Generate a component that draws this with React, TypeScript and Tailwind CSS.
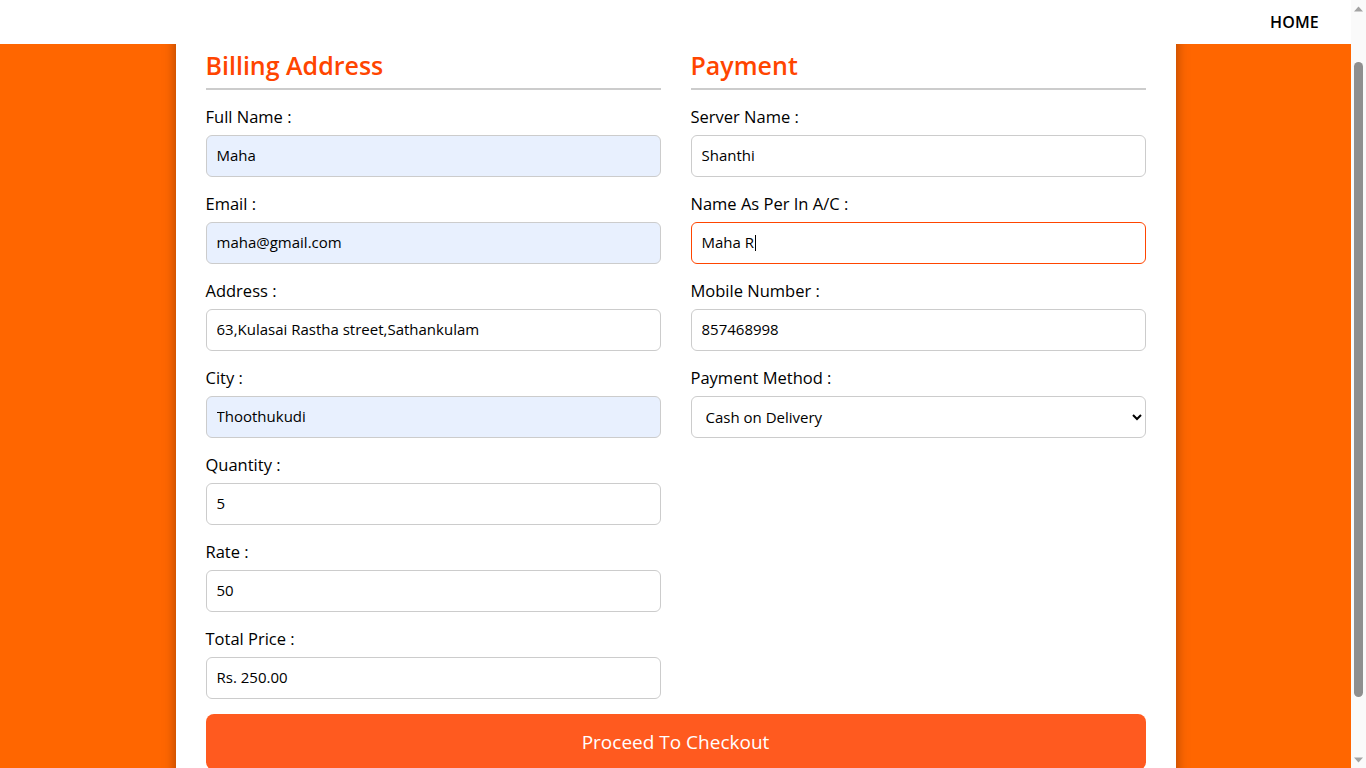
import React, { useLayoutEffect, useRef } from "react";

const font = { fontFamily: '"Open Sans", "Noto Sans", sans-serif' };

function Field({
  label,
  value,
  autofill,
  focused,
}: {
  label: string;
  value: string;
  autofill?: boolean;
  focused?: boolean;
}) {
  return (
    <div className="flex flex-col mb-[15px]">
      <label className="text-[16.5px] leading-[24px] text-black mb-[6px]">{label}</label>
      <div className="relative">
        <input
          defaultValue={value}
          className={
            "h-[42px] w-full rounded-[6px] border px-[10px] pb-[2px] text-[15px] text-black outline-none " +
            (autofill ? "bg-[#e8f0fe] " : "bg-white ") +
            (focused ? "border-[#ff4500]" : "border-[#cccccc]")
          }
        />
        {focused && <span className="absolute left-[64px] top-[13px] w-px h-[16px] bg-black" />}
      </div>
    </div>
  );
}

function Scrollbar() {
  return (
    <div className="w-[15px] h-[768px] bg-[#fafafa] flex flex-col items-center shrink-0">
      <div className="h-[17px] flex items-center justify-center">
        <svg width="9" height="6" viewBox="0 0 9 6">
          <path d="M0 5.5 L4.5 0.5 L9 5.5 Z" fill="#a3a3a3" />
        </svg>
      </div>
      <div className="flex-1 w-full flex flex-col items-center">
        <div className="h-[45px]" />
        <div className="w-[9px] h-[635px] rounded-[5px] bg-[#8f8f8f]" />
      </div>
      <div className="h-[17px] flex items-center justify-center">
        <svg width="9" height="6" viewBox="0 0 9 6">
          <path d="M0 0.5 L4.5 5.5 L9 0.5 Z" fill="#a3a3a3" />
        </svg>
      </div>
    </div>
  );
}

export default function App() {
  const ref = useRef<HTMLDivElement>(null);
  useLayoutEffect(() => {
    if (ref.current) ref.current.scrollTop = 58;
  }, []);
  return (
    <div className="flex w-full h-[768px] overflow-hidden" style={font}>
      <div ref={ref} className="flex-1 h-[768px] overflow-hidden bg-[#ff6600]">
        <header className="sticky top-0 z-10 h-[44px] bg-white flex items-center justify-end pr-[32px]">
          <span className="text-[16px] font-semibold text-black tracking-[0.2px]">HOME</span>
        </header>
        <div className="pt-[34px] pb-[34px]">
          <div className="mx-auto w-[1000px] bg-white p-[30px] shadow-[0_0_12px_rgba(0,0,0,0.35)]">
            <div className="grid grid-cols-2 gap-x-[30px]">
              <div>
                <h2 className="text-[25px] leading-[30px] font-semibold text-[#ff4500] pb-[8px] border-b-2 border-[#cccccc] mb-[15px]">
                  Billing Address
                </h2>
                <Field label="Full Name :" value="Maha" autofill />
                <Field label="Email :" value="maha@gmail.com" autofill />
                <Field label="Address :" value="63,Kulasai Rastha street,Sathankulam" />
                <Field label="City :" value="Thoothukudi" autofill />
                <Field label="Quantity :" value="5" />
                <Field label="Rate :" value="50" />
                <Field label="Total Price :" value="Rs. 250.00" />
              </div>
              <div>
                <h2 className="text-[25px] leading-[30px] font-semibold text-[#ff4500] pb-[8px] border-b-2 border-[#cccccc] mb-[15px]">
                  Payment
                </h2>
                <Field label="Server Name :" value="Shanthi" />
                <Field label="Name As Per In A/C :" value="Maha R" focused />
                <Field label="Mobile Number :" value="857468998" />
                <div className="flex flex-col mb-[15px]">
                  <label className="text-[16.5px] leading-[24px] text-black mb-[6px]">Payment Method :</label>
                  <select
                    defaultValue="cod"
                    className="h-[42px] w-full rounded-[6px] border border-[#cccccc] bg-white px-[10px] text-[15px] text-black outline-none"
                  >
                    <option value="cod">Cash on Delivery</option>
                    <option value="card">Credit Card</option>
                    <option value="upi">UPI</option>
                  </select>
                </div>
              </div>
            </div>
            <button className="w-full h-[56px] rounded-[8px] bg-[#ff5a1f] text-white text-[19px]">
              Proceed To Checkout
            </button>
          </div>
        </div>
      </div>
      <Scrollbar />
    </div>
  );
}
